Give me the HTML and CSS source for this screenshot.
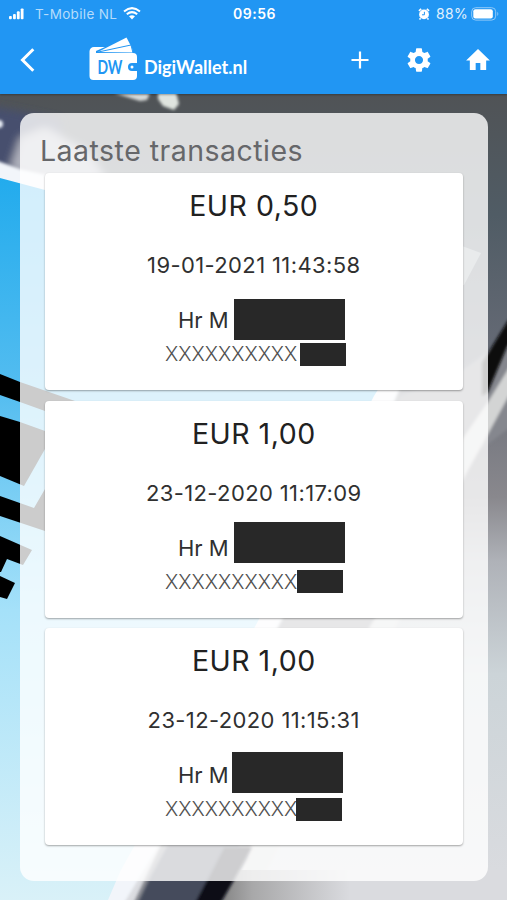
FILE: index.html
```html
<!DOCTYPE html>
<html lang="nl">
<head>
  <meta charset="UTF-8">
  <title>DigiWallet.nl</title>
  <link rel="stylesheet" href="styles.css">
</head>
<body>
  <div class="app">
    <!-- achtergrond -->
    <svg class="backdrop" viewBox="0 0 507 900" preserveAspectRatio="none">
      <defs>
        <linearGradient id="base" x1="0" y1="94" x2="0" y2="900" gradientUnits="userSpaceOnUse">
          <stop offset="0" stop-color="#505356"/>
          <stop offset=".15" stop-color="#505c65"/>
          <stop offset=".32" stop-color="#656a75"/>
          <stop offset=".5" stop-color="#89888d"/>
          <stop offset=".58" stop-color="#afb2b8"/>
          <stop offset=".72" stop-color="#ccd4d8"/>
          <stop offset="1" stop-color="#dbdce0"/>
        </linearGradient>
        <linearGradient id="screen" x1="0" y1="175" x2="0" y2="900" gradientUnits="userSpaceOnUse">
          <stop offset="0" stop-color="#22abed"/>
          <stop offset=".3" stop-color="#54bdf0"/>
          <stop offset=".6" stop-color="#a5e1f9"/>
          <stop offset="1" stop-color="#d9f1f8"/>
        </linearGradient>
        <linearGradient id="fade" x1="210" y1="0" x2="350" y2="0" gradientUnits="userSpaceOnUse">
          <stop offset="0" stop-color="#777"/>
          <stop offset=".3" stop-color="#a8a8a9"/>
          <stop offset="1" stop-color="#dadbdf"/>
        </linearGradient>
        <filter id="soft"><feGaussianBlur stdDeviation="1.6"/></filter>
        <filter id="wide"><feGaussianBlur stdDeviation="4"/></filter>
      </defs>
      <rect width="507" height="900" fill="url(#base)"/>
      <g filter="url(#wide)">
        <polygon points="-20,104 22,112 60,120 70,185 -20,175" fill="#474f6e"/>
        <polygon points="20,138 45,128 90,152 110,185 40,182 10,168" fill="#b0b2bd"/>
      </g>
      <g filter="url(#soft)">
        <polygon points="114,93 150,93 147,100 140,101" fill="#d7dad9"/>
        <polygon points="158,92 176,92 179,104 174,110 163,106 158,99" fill="#dfe4df"/>
        <circle cx="-1" cy="124" r="4" fill="#e8edf5"/>
        <polygon points="-5,160 20,169 60,178 200,215 440,290 330,560 120,910 -5,910" fill="#f2f5fa"/>
        <polygon points="400,396 455,375 520,330 520,420 480,450 405,570 345,690 270,820 215,915 128,915 160,847 280,623" fill="#85878e"/>
        <polygon points="372,623 408,570 462,440 488,402 520,350 520,375 488,434 465,476 390,640 262,878 243,878 250,847" fill="#d3d4d4"/>
      </g>
      <rect x="205" y="870" width="302" height="30" fill="url(#fade)"/>
      <g filter="url(#soft)">
        <polygon points="482,363 507,322 520,305 520,330 507,347 488,392 482,396" fill="#0a0b0f"/>
        <polygon points="130,920 149,880 168,845 240,845 200,920" fill="#454b5c"/>
        <polygon points="207,880 224,847 252,847 234,880 211,920 186,920" fill="#080b18"/>
      </g>
      <polygon points="0,178 45,190 440,290 374,396 257,623 120,872 108,900 0,900" fill="url(#screen)"/>
      <polygon points="462,246 481,253 464,285 458,285" fill="#8f9ba2"/>
      <g fill="#000">
        <polygon points="0,374 20,382 75,401 100,412 45,411 20,402 0,395"/>
        <polygon points="0,416 20,422 45,431 45,449 24,486 0,476"/>
        <polygon points="0,496 34,508 45,489 60,489 45,531 0,516"/>
        <polygon points="0,536 32,550 23,565 7,559 1,572 0,572"/>
        <polygon points="0,576 15,583 7,599 0,597"/>
      </g>
    </svg>

    <div class="header">
      <div class="status-bar">
        <div class="status-left">
          <svg class="signal" viewBox="0 0 16 12">
            <rect x="0" y="8" width="3" height="3.5" rx="1"/>
            <rect x="4.3" y="6" width="3" height="5.5" rx="1"/>
            <rect x="8.4" y="3" width="3" height="8.5" rx="1"/>
            <rect x="12.5" y="0" width="3" height="11.5" rx="1"/>
          </svg>
          <span class="carrier">T-Mobile NL</span>
          <svg class="wifi" viewBox="0 0 18 13">
            <path d="M1 4.5Q9-2.2 17 4.5M3.8 7.3Q9 3 14.2 7.3" fill="none" stroke="#fff" stroke-width="2"/>
            <path d="M6 9.3Q9 7 12 9.3L9 12.5z" fill="#fff"/>
          </svg>
        </div>
        <div class="status-time">09:56</div>
        <div class="status-right">
          <svg class="alarm" viewBox="0 0 12 12">
            <circle cx="6" cy="6.4" r="4.9" fill="#fff"/>
            <path d="M.9 2.8 3.2.9M11.1 2.8 8.8.9M2.6 10.3 1.5 11.5M9.4 10.3l1.1 1.2" stroke="#fff" stroke-width="1.6"/>
            <path d="M6.4 3.8v3H4" fill="none" stroke="#2196f3" stroke-width="1"/>
          </svg>
          <span class="percent">88%</span>
          <svg class="battery" viewBox="0 0 29 14">
            <rect x=".7" y=".7" width="24" height="12.4" rx="4" fill="none" stroke="#90caf9" stroke-width="1"/>
            <rect x="2.3" y="2.3" width="19.5" height="9.2" rx="2" fill="#fff"/>
            <path d="M26.3 4.7q2 2.2 0 4.4z" fill="#90caf9"/>
          </svg>
        </div>
      </div>

      <div class="nav-bar">
        <svg class="back" viewBox="0 0 16 24"><path d="M13.3 1.3 2.5 12l10.8 10.7" fill="none" stroke="#fff" stroke-width="3"/></svg>
        <div class="brand">
          <svg class="wallet" viewBox="0 0 50 45">
            <path d="M7 16 37.500.5 43 11 44 17z" fill="#fff"/>
            <path d="M7 15.500 42 8l2 8z" fill="#fff" stroke="#2196f3" stroke-width="1"/>
            <path d="M5 10h11L7 14v2h37a4 4 0 0 1 4 4v6h-5a4 4 0 0 0 0 8h5v5a4 4 0 0 1-4 4H4.500a4 4 0 0 1-4-4V14.500A4.500 4.500 0 0 1 5 10z" fill="#fff"/>
            <circle cx="43" cy="30" r="1.500" fill="#fff"/>
            <text x="8.500" y="36.500" class="wallet-text" textLength="25" lengthAdjust="spacingAndGlyphs">DW</text>
          </svg>
          <span class="brand-name">DigiWallet.nl</span>
        </div>
        <div class="actions">
          <svg class="icon" viewBox="0 0 24 24"><path d="M12 4.700v14.600M4.700 12h14.600" stroke="#fff" stroke-width="1.900"/></svg>
          <svg class="icon" viewBox="0 0 24 24"><path fill="#fff" d="M19.430 12.980c.04-.32.07-.64.07-.98s-.03-.66-.07-.98l2.110-1.650c.19-.15.24-.42.12-.64l-2-3.460c-.12-.22-.39-.3-.61-.22l-2.490 1c-.52-.4-1.080-.73-1.690-.98l-.38-2.650C14.460 2.180 14.250 2 14 2h-4c-.25 0-.46.18-.49.42l-.38 2.650c-.61.25-1.170.59-1.690.98l-2.490-1c-.23-.09-.49 0-.61.22l-2 3.460c-.13.22-.07.49.12.64l2.110 1.650c-.04.32-.07.65-.07.98s.03.66.07.98l-2.110 1.650c-.19.15-.24.42-.12.64l2 3.460c.12.22.39.3.61.22l2.490-1c.52.4 1.080.73 1.690.98l.38 2.650c.03.24.24.42.49.42h4c.25 0 .46-.18.49-.42l.38-2.650c.61-.25 1.170-.59 1.690-.98l2.490 1c.23.09.49 0 .61-.22l2-3.460c.12-.22.07-.49-.12-.64l-2.110-1.650zM12 15.500c-1.930 0-3.500-1.570-3.500-3.500s1.570-3.500 3.500-3.500 3.500 1.570 3.500 3.500-1.570 3.500-3.500 3.500z"/></svg>
          <svg class="icon" viewBox="0 0 24 24"><path fill="#fff" d="M10 20.500v-6h4v6h5v-8h3.200L12 2.500 1.800 12.500H5v8z"/></svg>
        </div>
      </div>
    </div>

    <div class="panel">
      <div class="panel-title">Laatste transacties</div>
      <div class="transactions">
        <div class="card card-first">
          <div class="amount">EUR 0,50</div>
          <div class="date">19-01-2021 11:43:58</div>
          <div class="name">Hr M</div>
          <div class="account">XXXXXXXXXX</div>
          <div class="mask mask-name"></div>
          <div class="mask mask-account"></div>
        </div>
        <div class="card card-second">
          <div class="amount">EUR 1,00</div>
          <div class="date">23-12-2020 11:17:09</div>
          <div class="name">Hr M</div>
          <div class="account">XXXXXXXXXX</div>
          <div class="mask mask-name"></div>
          <div class="mask mask-account"></div>
        </div>
        <div class="card card-third">
          <div class="amount">EUR 1,00</div>
          <div class="date">23-12-2020 11:15:31</div>
          <div class="name">Hr M</div>
          <div class="account">XXXXXXXXXX</div>
          <div class="mask mask-name"></div>
          <div class="mask mask-account"></div>
        </div>
      </div>
    </div>
  </div>
</body>
</html>
```
FILE: styles.css
```css
body {
  margin: 0;
  font-family: Inter, "Liberation Sans", sans-serif;
  color: #212121;
}

.app {
  position: relative;
  height: 900px;
  overflow: hidden;
}

.backdrop {
  position: absolute;
  top: 0;
  left: 0;
  width: 100%;
  height: 100%;
}

.header {
  position: relative;
  height: 94px;
  background: #2196f3;
  color: white;
  box-shadow: 0 1px 2px rgba(0,0,0,0.3);
}

.status-bar {
  display: grid;
  grid-template-columns: 1fr auto 1fr;
  align-items: center;
  height: 27px;
  padding: 0 7px 0 9px;
}

.status-left,
.status-right {
  display: flex;
  align-items: center;
}

.status-right {
  justify-content: flex-end;
}

.signal {
  width: 15px;
  height: 12px;
  margin-right: 11px;
  fill: white;
}

.carrier {
  font-size: 13.5px;
  letter-spacing: 0.35px;
  color: #b5dcfb;
}

.wifi {
  width: 18px;
  height: 13px;
  margin-left: 6px;
}

.status-time {
  font-size: 14px;
  font-weight: 600;
  letter-spacing: 0.5px;
}

.alarm {
  width: 12px;
  height: 12px;
  margin-right: 6px;
}

.percent {
  font-size: 14px;
  letter-spacing: 0.3px;
  color: #e3f2fd;
}

.battery {
  width: 29px;
  height: 14px;
  margin-left: 3px;
}

.nav-bar {
  display: flex;
  align-items: center;
  height: 65px;
  padding: 0 15px 0 20px;
}

.back {
  width: 16px;
  height: 24px;
}

.brand {
  display: flex;
  align-items: center;
  margin-left: 53px;
}

.wallet {
  width: 50px;
  height: 45px;
}

.wallet-text {
  font-family: Lato, sans-serif;
  font-size: 19px;
  font-weight: 700;
  fill: #2196f3;
}

.brand-name {
  margin: 14px 0 0 5px;
  font-family: Lato, sans-serif;
  font-size: 18px;
  font-weight: 700;
}

.actions {
  display: flex;
  gap: 31px;
  margin-left: auto;
}

.icon {
  width: 28px;
  height: 28px;
}

.panel {
  position: relative;
  height: 768px;
  margin: 19px 19.5px 0 20px;
  border-radius: 14px;
  background: rgba(255,255,255,0.8);
}

.panel-title {
  height: 60px;
  padding-left: 20px;
  box-sizing: border-box;
  padding-top: 20px;
  font-size: 28.5px;
  line-height: 36px;
  letter-spacing: 0.48px;
  color: #66676a;
}

.transactions {
  display: flex;
  flex-direction: column;
  gap: 10.5px;
  padding: 0 24.5px;
}

.card {
  position: relative;
  height: 217px;
  border-radius: 4px;
  background: white;
  box-shadow: 0 1px 2px rgba(0,0,0,0.35);
  text-align: center;
}

.amount {
  padding-top: 15px;
  font-size: 28.5px;
  line-height: 36px;
  letter-spacing: 0.5px;
}

.date {
  padding-top: 27px;
  font-size: 22px;
  line-height: 29px;
  letter-spacing: 0.38px;
  color: #303030;
}

.name {
  padding: 25px 0 0 133.5px;
  font-size: 22px;
  line-height: 30px;
  text-align: left;
  color: #303030;
}

.account {
  padding: 5px 0 0 120.5px;
  font-size: 20px;
  font-weight: 300;
  line-height: 28px;
  text-align: left;
  color: #505050;
}

/* afgeschermde gegevens */
.mask {
  position: absolute;
  background: #282828;
}

.mask-name {
  width: 111px;
  height: 40.5px;
}

.mask-account {
  width: 46px;
  height: 23px;
}

.card-first .mask-name {
  top: 126px;
  left: 189px;
}

.card-first .mask-account {
  top: 170px;
  left: 255.5px;
}

.card-second .mask-name {
  top: 121.5px;
  left: 189px;
}

.card-second .mask-account {
  top: 169px;
  left: 252.5px;
}

.card-third .mask-name {
  top: 124px;
  left: 187.5px;
}

.card-third .mask-account {
  top: 169.5px;
  left: 251px;
}
```
